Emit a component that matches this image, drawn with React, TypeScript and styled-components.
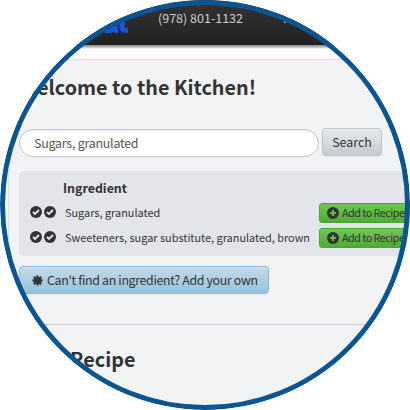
import React from "react";
import styled, { createGlobalStyle } from "styled-components";

const GlobalStyle = createGlobalStyle`
  * { box-sizing: border-box; }
  body {
    margin: 0;
    background: #fff;
    font-family: "Noto Sans CJK SC", "Noto Sans", sans-serif;
    color: #333;
  }
  svg { flex: none; }
`;

const Lens = styled.main`
  position: relative;
  width: 410px;
  height: 410px;
  overflow: hidden;
  border-radius: 50%;
  background: #fff;
  white-space: nowrap;

  &::after {
    content: "";
    position: absolute;
    inset: 0;
    border: 5px solid #0b5592;
    border-radius: 50%;
    pointer-events: none;
  }
`;

const Header = styled.header`
  display: flex;
  align-items: flex-start;
  height: 45px;
  background: linear-gradient(#333, #222);
  border-bottom: 1px solid #1b1b1b;
  box-shadow: 0 1px 0 #999, 0 2px 0 #aaa, 0 3px 0 #ccc, 0 4px 0 #eee;
`;

const Brand = styled.svg`
  width: 28px;
  height: 33px;
  margin-left: 101px;
`;

const Phone = styled.span`
  margin-left: 29px;
  padding-top: 8px;
  color: #ccc;
  font-size: 12.5px;
  line-height: 20px;
`;

const MenuMark = styled.i`
  width: 2px;
  height: 3px;
  margin: 20px 0 0 41px;
  background: #999;
`;

const Panel = styled.section`
  height: 351px;
  margin: 14px 0 0 8px;
  padding: 17px 0 0 10px;
  border: 1px solid #c9e3f1;
  border-right: 0;
  background: #f1f3f5;
`;

const Title = styled.h1<{ $indent?: number }>`
  margin: 0;
  padding-left: ${({ $indent = 0 }) => $indent}px;
  font-size: 19.8px;
  line-height: 20px;
  font-weight: 700;
`;

const SearchRow = styled.form`
  display: flex;
  gap: 3px;
  height: 30px;
  margin-top: 31px;
`;

const Query = styled.input`
  width: 300px;
  height: 28px;
  margin-top: 1px;
  padding: 0 14px;
  border: 1px solid #c6c8cb;
  border-radius: 14px;
  outline: 0;
  background: #fff;
  box-shadow: inset 0 1px 1px rgba(0, 0, 0, 0.08);
  color: #555;
  font: 12.4px "Noto Sans CJK SC", sans-serif;
  letter-spacing: -0.22px;
`;

const SearchButton = styled.button`
  width: 60px;
  height: 28px;
  padding: 0;
  border: 1px solid #bdc6ce;
  border-radius: 4px;
  background: linear-gradient(#e7eaed, #c4cbd1);
  box-shadow: inset 0 1px 0 rgba(255, 255, 255, 0.2), 0 1px 2px rgba(0, 0, 0, 0.05);
  color: #333;
  font: 12.4px/26px "Noto Sans CJK SC", sans-serif;
`;

const Results = styled.div`
  height: 85px;
  margin-top: 13px;
  padding: 7px 0 0 11px;
  border-radius: 5px;
  background: #e3e5ea;
`;

const ColumnTitle = styled.div`
  margin-bottom: 3px;
  padding-left: 33px;
  font-size: 12.4px;
  line-height: 20px;
  font-weight: 700;
`;

const Row = styled.div`
  display: flex;
  align-items: flex-start;
  height: 25px;
  padding-top: 2px;
`;

const Checks = styled.span`
  display: flex;
  flex: none;
  gap: 2px;
  width: 35px;
  margin-top: 3px;
`;

const Name = styled.span`
  flex: none;
  width: 254px;
  font-size: 10.9px;
  line-height: 18px;
`;

const AddButton = styled.button`
  display: flex;
  flex: none;
  align-items: center;
  gap: 3px;
  width: 96px;
  height: 20px;
  padding: 0 7px;
  border: 1px solid #49a63a;
  border-radius: 3px;
  background: linear-gradient(#70c853, #4dab33);
  color: #333;
  font: 10.8px/18px "Noto Sans CJK SC", sans-serif;
  letter-spacing: -0.52px;
`;

const AddLabel = styled.span`
  padding-bottom: 1px;
  line-height: 17px;
`;

const NewIngredient = styled.button`
  display: flex;
  align-items: center;
  gap: 4px;
  width: 250px;
  height: 28px;
  margin-top: 10px;
  padding: 0 12px;
  border: 1px solid #8bbbd9;
  border-radius: 4px;
  background: linear-gradient(#c5dbe6, #96c2dc);
  box-shadow: inset 0 1px 0 rgba(255, 255, 255, 0.2), 0 1px 2px rgba(0, 0, 0, 0.05);
  color: #333;
  font: 12.4px/26px "Noto Sans CJK SC", sans-serif;
  letter-spacing: -0.34px;
`;

const Divider = styled.hr`
  height: 1px;
  margin: 30px 0 24px;
  border: 0;
  background: #c8cacd;
`;

const CheckIcon = () => (
  <svg width="12" height="12" viewBox="0 0 12 12">
    <circle cx="6" cy="6" r="6" fill="#333" />
    <path d="M3 6l2 2 4-4" fill="none" stroke="#e3e5ea" strokeWidth="1.9" />
  </svg>
);

const PlusIcon = () => (
  <svg width="12" height="12" viewBox="0 0 12 12">
    <circle cx="6" cy="6" r="6" fill="#333" />
    <path d="M3 6h6M6 3v6" stroke="#65bd4a" strokeWidth="2" />
  </svg>
);

const BurstIcon = () => (
  <svg width="11" height="11" viewBox="0 0 12 12">
    <path d="M6 .5v11M.5 6h11M2 2l8 8M10 2l-8 8" stroke="#333" strokeWidth="2.5" />
  </svg>
);

const ingredients = ["Sugars, granulated", "Sweeteners, sugar substitute, granulated, brown"];

export default function App() {
  return (
    <>
      <GlobalStyle />
      <Lens>
        <Header>
          <Brand viewBox="0 0 28 33">
            <path
              d="M13 24H9q-4 1-4 5t4 2q3-1 4-4M14 20v8q0 3 3 3M21 18v9q0 4 6 3M17 22h7"
              fill="none"
              stroke="#1555df"
              strokeWidth="5"
            />
          </Brand>
          <Phone>(978) 801-1132</Phone>
          <MenuMark />
        </Header>
        <Panel>
          <Title>Welcome to the Kitchen!</Title>
          <SearchRow>
            <Query defaultValue="Sugars, granulated" />
            <SearchButton type="button">Search</SearchButton>
          </SearchRow>
          <Results>
            <ColumnTitle>Ingredient</ColumnTitle>
            {ingredients.map((name) => (
              <Row key={name}>
                <Checks>
                  <CheckIcon />
                  <CheckIcon />
                </Checks>
                <Name>{name}</Name>
                <AddButton>
                  <PlusIcon />
                  <AddLabel>Add to Recipe</AddLabel>
                </AddButton>
              </Row>
            ))}
          </Results>
          <NewIngredient>
            <BurstIcon />
            Can't find an ingredient? Add your own
          </NewIngredient>
          <Divider />
          <Title as="h2" $indent={51}>Recipe</Title>
        </Panel>
      </Lens>
    </>
  );
}
